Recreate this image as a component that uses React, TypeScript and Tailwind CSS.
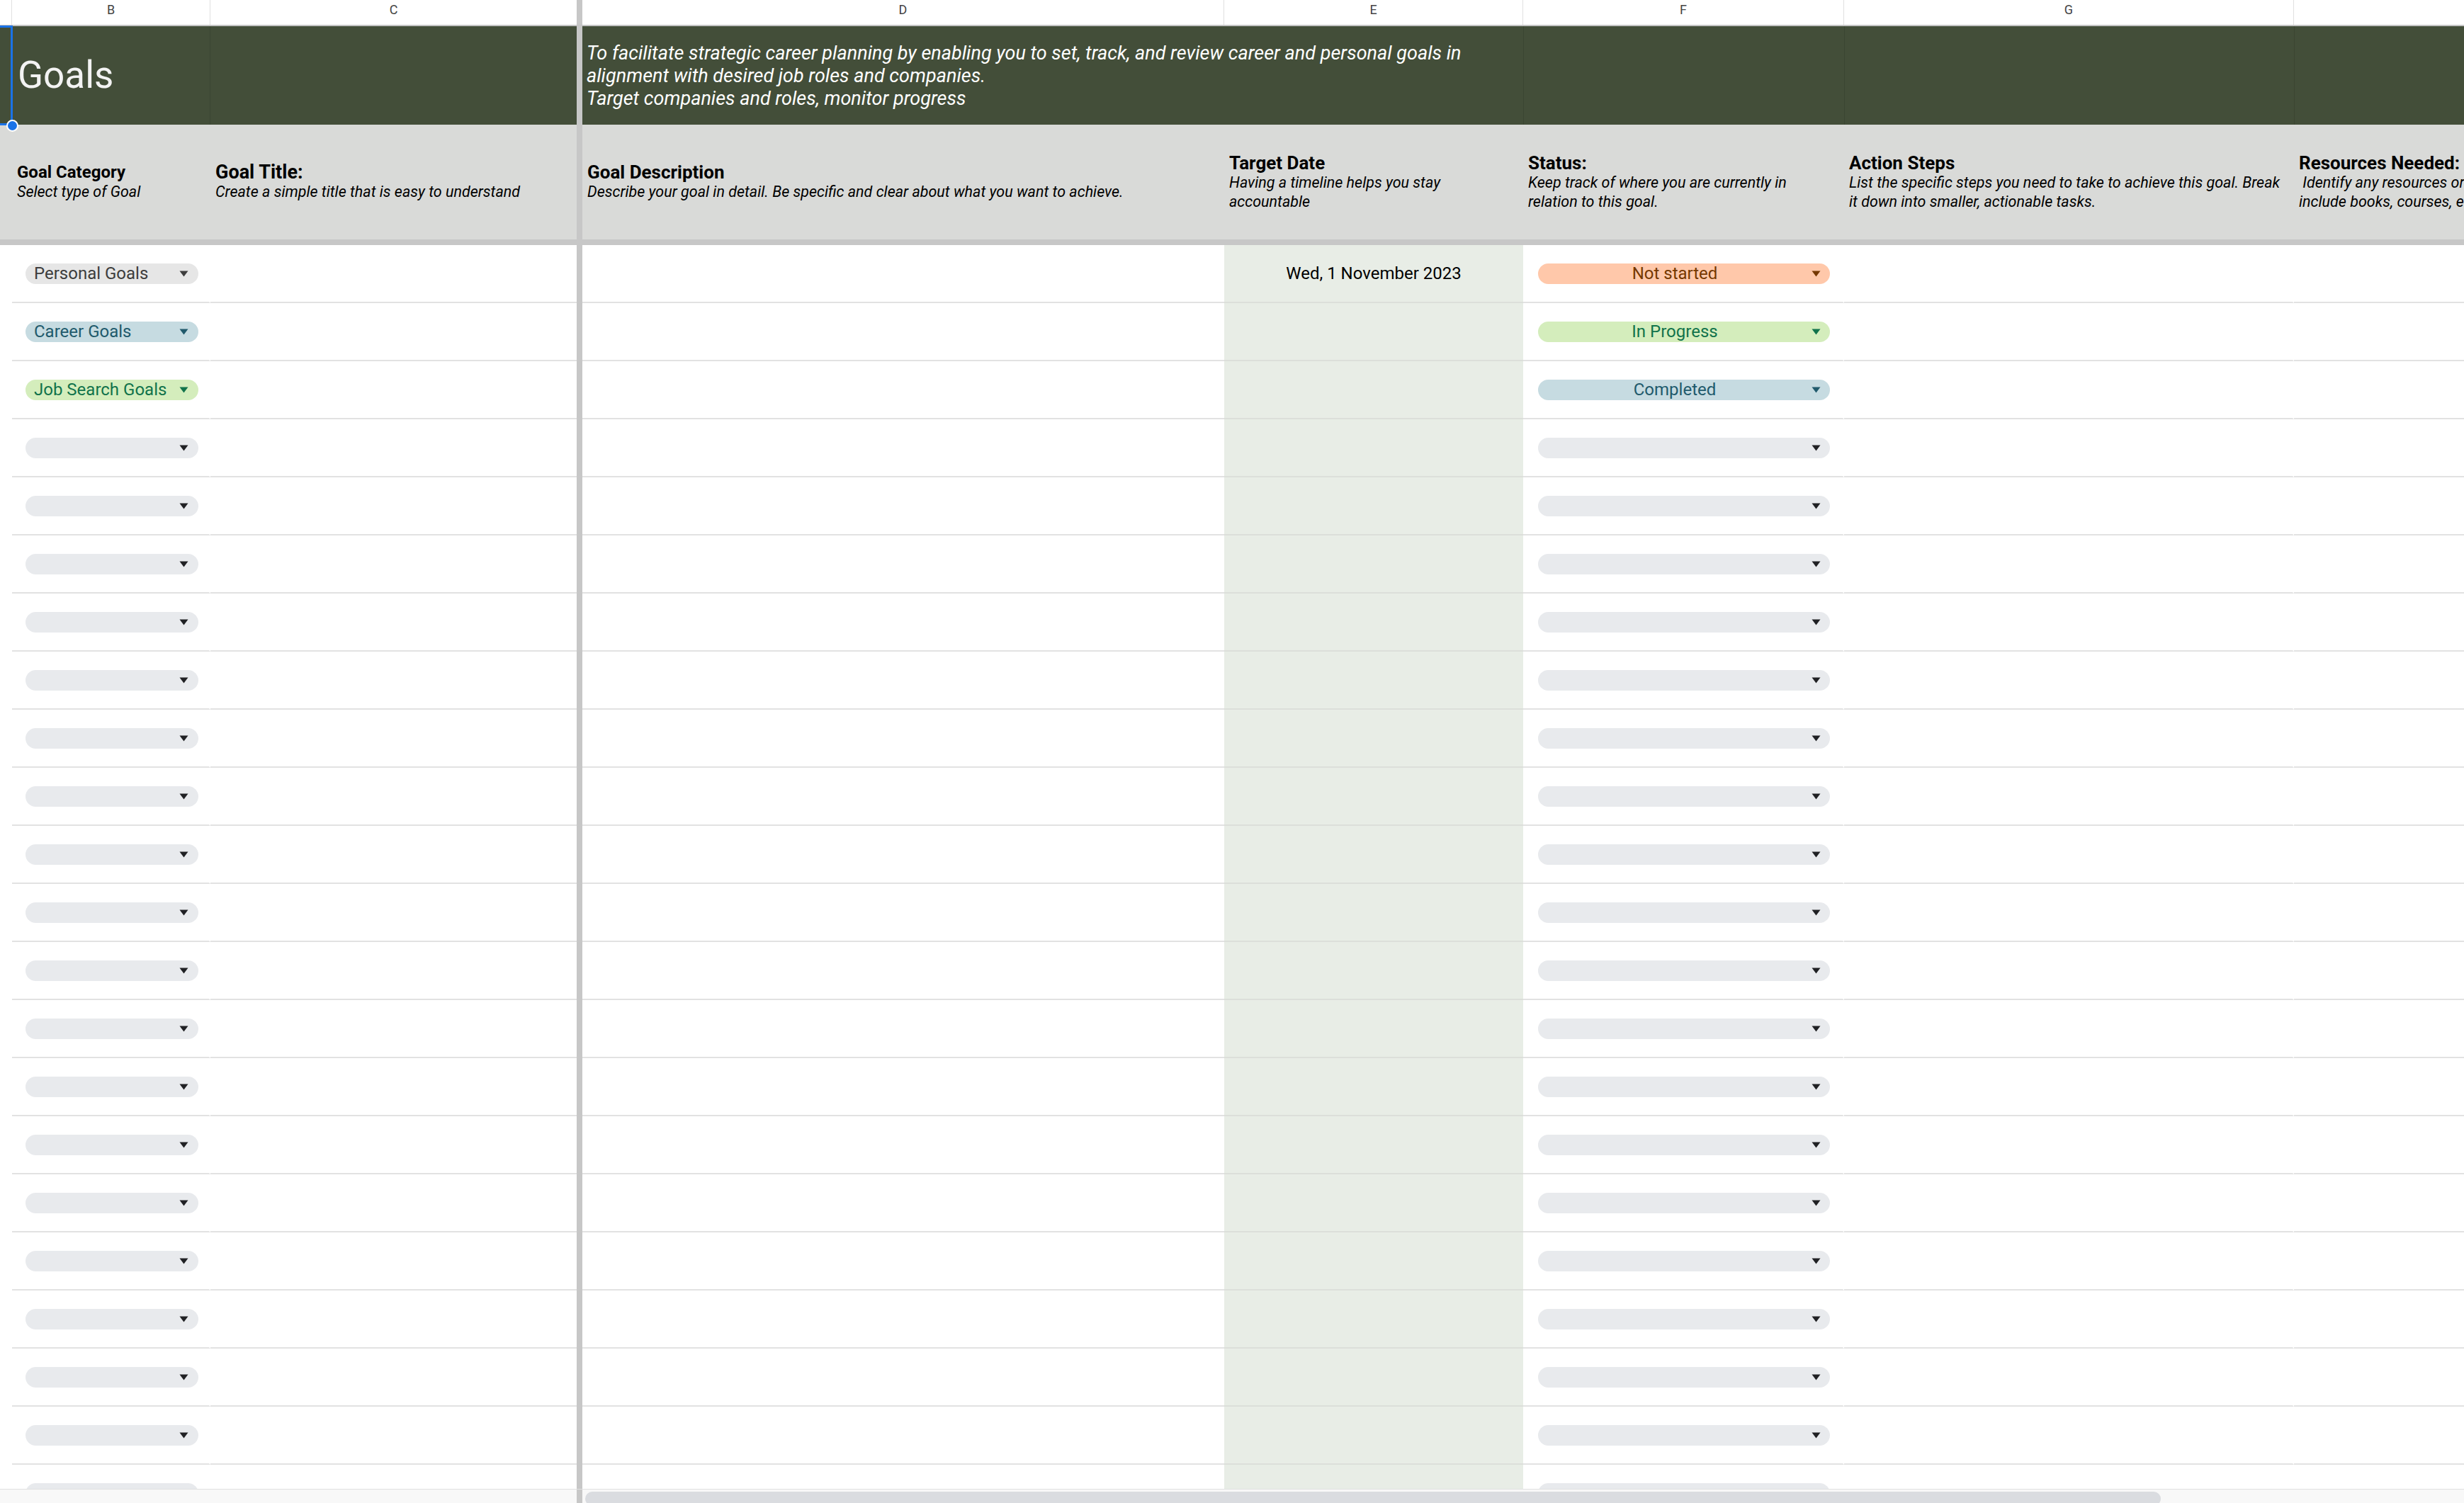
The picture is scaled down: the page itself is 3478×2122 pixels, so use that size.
import React from "react";

type Chip = { label: string; bg: string; fg: string } | null;

const categories: Chip[] = [
  { label: "Personal Goals", bg: "bg-[#e6e6e6]", fg: "text-[#3d3d3d]" },
  { label: "Career Goals", bg: "bg-[#c6dbe1]", fg: "text-[#215a6c]" },
  { label: "Job Search Goals", bg: "bg-[#d4edbc]", fg: "text-[#11734b]" },
];

const statuses: Chip[] = [
  { label: "Not started", bg: "bg-[#ffc8aa]", fg: "text-[#753800]" },
  { label: "In Progress", bg: "bg-[#d4edbc]", fg: "text-[#11734b]" },
  { label: "Completed", bg: "bg-[#c6dbe1]", fg: "text-[#215a6c]" },
];

const rows = Array.from({ length: 22 }, (_, i) => ({
  category: categories[i] ?? null,
  status: statuses[i] ?? null,
  date: i === 0 ? "Wed, 1 November 2023" : "",
}));

function Arrow() {
  return (
    <svg width="13" height="9" viewBox="0 0 13 9" className="shrink-0">
      <path d="M0.5 0.5h12L6.5 8.5z" fill="currentColor" />
    </svg>
  );
}

function CategoryChip({ chip }: { chip: Chip }) {
  return (
    <div
      className={`ml-[19px] flex h-[29px] w-[244px] items-center justify-between rounded-full pl-3 pr-[14px] text-[24px] ${
        chip ? `${chip.bg} ${chip.fg}` : "bg-[#e8eaed] text-[#202124]"
      }`}
    >
      <span className="whitespace-nowrap">{chip?.label}</span>
      <Arrow />
    </div>
  );
}

function StatusChip({ chip }: { chip: Chip }) {
  return (
    <div
      className={`ml-[21px] flex h-[29px] w-[412px] items-center rounded-full pr-[13px] text-[24px] ${
        chip ? `${chip.bg} ${chip.fg}` : "bg-[#e8eaed] text-[#202124]"
      }`}
    >
      <span className="flex-1 whitespace-nowrap text-center">{chip?.label}</span>
      <Arrow />
    </div>
  );
}

function HeaderCell({
  title,
  lines,
  width,
  titleSize = "text-[26px]",
}: {
  title: string;
  lines: string[];
  width: string;
  titleSize?: string;
}) {
  return (
    <div className={`${width} flex shrink-0 flex-col justify-center overflow-hidden pl-[7px] text-black`}>
      <div className={`whitespace-nowrap font-bold leading-[27px] ${titleSize}`}>{title}</div>
      {lines.map((l) => (
        <div key={l} className="whitespace-pre text-[21.5px] italic leading-[27px]">
          {l}
        </div>
      ))}
    </div>
  );
}

export default function App() {
  return (
    <div className="relative flex h-[2122px] w-[3478px] flex-col overflow-hidden bg-white font-['Roboto',sans-serif]">
      {/* column letters */}
      <div className="flex h-[37px] shrink-0 border-b-2 border-[#c4c4c4] text-[18px] leading-[18px] text-[#444]">
        <div className="w-[17px] shrink-0 border-r border-[#e0e0e0]" />
        <div className="flex w-[280px] shrink-0 justify-center border-r border-[#e0e0e0] pt-[5px]">B</div>
        <div className="flex w-[517px] shrink-0 justify-center pt-[5px]">C</div>
        <div className="w-[8px] shrink-0 bg-[#c7c7c7]" />
        <div className="flex w-[906px] shrink-0 justify-center border-r border-[#e0e0e0] pt-[5px]">D</div>
        <div className="flex w-[422px] shrink-0 justify-center border-r border-[#e0e0e0] pt-[5px]">E</div>
        <div className="flex w-[453px] shrink-0 justify-center border-r border-[#e0e0e0] pt-[5px]">F</div>
        <div className="flex w-[635px] shrink-0 justify-center border-r border-[#e0e0e0] pt-[5px]">G</div>
        <div className="w-[700px] shrink-0" />
      </div>

      {/* title band */}
      <div className="flex h-[139px] shrink-0 bg-[#434e39] text-[#f3f3f3]">
        <div className="w-[17px] shrink-0" />
        <div className="relative z-10 flex w-[280px] shrink-0 items-center border-r border-[#3b4532] pl-2">
          <span className="whitespace-nowrap text-[53px] leading-none">Goals</span>
        </div>
        <div className="w-[517px] shrink-0" />
        <div className="w-[8px] shrink-0 bg-[#c7c7c7]" />
        <div className="flex w-[1328px] shrink-0 flex-col justify-center whitespace-nowrap pl-[6px] text-[27px] italic leading-[32px] text-white">
          <div>To facilitate strategic career planning by enabling you to set, track, and review career and personal goals in</div>
          <div>alignment with desired job roles and companies.</div>
          <div>Target companies and roles, monitor progress</div>
        </div>
        <div className="w-[453px] shrink-0 border-l border-[#3b4532]" />
        <div className="w-[635px] shrink-0 border-l border-[#3b4532]" />
        <div className="w-[700px] shrink-0 border-l border-[#3b4532]" />
      </div>

      {/* column headings */}
      <div className="flex h-[162px] shrink-0 bg-[#d9dad8]">
        <div className="w-[17px] shrink-0" />
        <HeaderCell width="w-[280px]" title="Goal Category" titleSize="text-[24px]" lines={["Select type of Goal"]} />
        <HeaderCell width="w-[517px]" title="Goal Title:" titleSize="text-[27px]" lines={["Create a simple title that is easy to understand"]} />
        <div className="w-[8px] shrink-0 bg-[#c7c7c7]" />
        <HeaderCell
          width="w-[906px]"
          title="Goal Description"
          lines={["Describe your goal in detail. Be specific and clear about what you want to achieve."]}
        />
        <HeaderCell width="w-[422px]" title="Target Date" lines={["Having a timeline helps you stay", "accountable"]} />
        <HeaderCell width="w-[453px]" title="Status:" lines={["Keep track of where you are currently in", "relation to this goal."]} />
        <HeaderCell
          width="w-[635px]"
          title="Action Steps"
          lines={["List the specific steps you need to take to achieve this goal. Break", "it down into smaller, actionable tasks."]}
        />
        <HeaderCell
          width="w-[700px]"
          title="Resources Needed:"
          lines={[" Identify any resources or tools you will need. This may", "include books, courses, events, mentors or contacts."]}
        />
      </div>

      <div className="h-[8px] shrink-0 bg-[#c7c7c7]" />

      {/* data rows */}
      <div className="flex-1 overflow-hidden">
        {rows.map((r, i) => (
          <div key={i} className="flex h-[82px] text-[24px] text-black">
            <div className="w-[17px] shrink-0" />
            <div className="flex w-[280px] shrink-0 items-center border-b-2 border-r-2 border-b-[#e2e2e2] border-r-white">
              <CategoryChip chip={r.category} />
            </div>
            <div className="w-[517px] shrink-0 border-b-2 border-[#e2e2e2]" />
            <div className="w-[8px] shrink-0 bg-[#c7c7c7]" />
            <div className="w-[906px] shrink-0 border-b-2 border-[#e2e2e2]" />
            <div className="flex w-[422px] shrink-0 items-center justify-center border-b-2 border-[#dcdfda] bg-[#e8ede6]">
              {r.date}
            </div>
            <div className="flex w-[453px] shrink-0 items-center border-b-2 border-r-2 border-b-[#e2e2e2] border-r-white">
              <StatusChip chip={r.status} />
            </div>
            <div className="w-[635px] shrink-0 border-b-2 border-r-2 border-b-[#e2e2e2] border-r-white" />
            <div className="w-[700px] shrink-0 border-b-2 border-[#e2e2e2]" />
          </div>
        ))}
      </div>

      {/* horizontal scrollbar */}
      <div className="flex h-[20px] shrink-0 border-t border-[#e0e0e0] bg-[#f8f8f8]">
        <div className="w-[814px] shrink-0" />
        <div className="w-[8px] shrink-0 bg-[#c7c7c7]" />
        <div className="ml-[4px] mt-[3px] h-[20px] w-[2224px] rounded-full bg-[#dadce0]" />
      </div>

      {/* selected cell A1 */}
      <div className="absolute left-[-3px] top-[36px] h-[141px] w-[21px] border-[3px] border-[#1a73e8]" />
      <div className="absolute left-[9px] top-[169px] h-[17px] w-[17px] rounded-full border-2 border-white bg-[#1a73e8]" />
    </div>
  );
}
